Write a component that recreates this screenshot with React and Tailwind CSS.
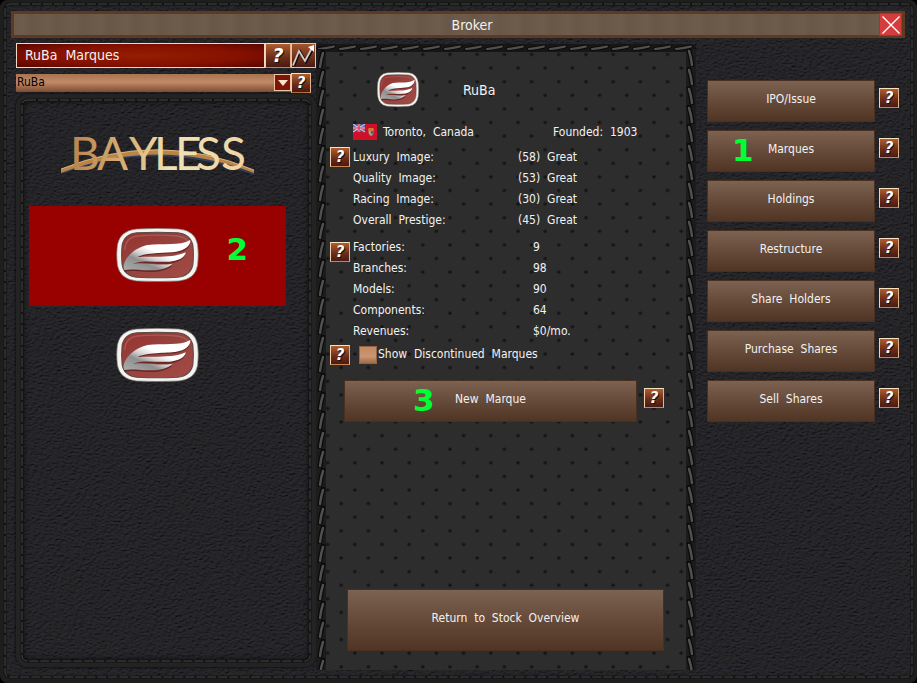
import { useState } from 'react'

const MARQUES = [
  { id: 1, name: 'Bayless', logo: 'bayless' },
  { id: 2, name: 'RuBa', logo: 'wing' },
  { id: 3, name: 'RuBa II', logo: 'wing' },
]

const IMAGE_STATS = [
  { label: 'Luxury  Image:', value: '(58)  Great' },
  { label: 'Quality  Image:', value: '(53)  Great' },
  { label: 'Racing  Image:', value: '(30)  Great' },
  { label: 'Overall  Prestige:', value: '(45)  Great' },
]

const COMPANY_STATS = [
  { label: 'Factories:', value: '9' },
  { label: 'Branches:', value: '98' },
  { label: 'Models:', value: '90' },
  { label: 'Components:', value: '64' },
  { label: 'Revenues:', value: '$0/mo.' },
]

const ACTIONS = [
  { label: 'IPO/Issue' },
  { label: 'Marques', marker: '1' },
  { label: 'Holdings' },
  { label: 'Restructure' },
  { label: 'Share  Holders' },
  { label: 'Purchase  Shares' },
  { label: 'Sell  Shares' },
]

function Leather() {
  return (
    <svg className="pointer-events-none absolute inset-0 h-full w-full" aria-hidden="true">
      <filter id="leather" x="0" y="0" width="100%" height="100%">
        <feTurbulence type="fractalNoise" baseFrequency="0.28 0.55" numOctaves="3" seed="4" result="n" />
        <feDiffuseLighting in="n" surfaceScale="1.9" diffuseConstant="1" lightingColor="#2a2a2d">
          <feDistantLight azimuth="250" elevation="52" />
        </feDiffuseLighting>
      </filter>
      <rect width="100%" height="100%" filter="url(#leather)" />
    </svg>
  )
}

// thread line running just inside a padded leather edge
function Stitch({ className }) {
  return (
    <svg className={`pointer-events-none absolute overflow-visible ${className}`} aria-hidden="true">
      <rect width="100%" height="100%" rx="5" fill="none" stroke="#121212" strokeWidth="3" />
      <rect width="100%" height="100%" rx="5" fill="none" stroke="#454545" strokeWidth="1" strokeDasharray="9 2" />
    </svg>
  )
}

function PerforatedPanel() {
  return (
    <svg className="pointer-events-none absolute inset-0 h-full w-full" aria-hidden="true">
      <defs>
        <pattern id="holesTop" x="-2" y="10.5" width="27.2" height="27.2" patternUnits="userSpaceOnUse">
          <ellipse cx="13.6" cy="13.6" rx="2" ry="1.6" fill="#151515" />
          <ellipse cx="0" cy="0" rx="2" ry="1.6" fill="#151515" />
          <ellipse cx="27.2" cy="0" rx="2" ry="1.6" fill="#151515" />
          <ellipse cx="0" cy="27.2" rx="2" ry="1.6" fill="#151515" />
          <ellipse cx="27.2" cy="27.2" rx="2" ry="1.6" fill="#151515" />
        </pattern>
        <pattern id="holesBottom" x="-2" y="242" width="27.2" height="27.2" patternUnits="userSpaceOnUse">
          <ellipse cx="13.6" cy="13.6" rx="2" ry="1.6" fill="#151515" />
          <ellipse cx="0" cy="0" rx="2" ry="1.6" fill="#151515" />
          <ellipse cx="27.2" cy="0" rx="2" ry="1.6" fill="#151515" />
          <ellipse cx="0" cy="27.2" rx="2" ry="1.6" fill="#151515" />
          <ellipse cx="27.2" cy="27.2" rx="2" ry="1.6" fill="#151515" />
        </pattern>
        <pattern id="ropeLeft" width="10" height="19" y="6" patternUnits="userSpaceOnUse">
          <rect width="10" height="19" fill="#1c1c1c" />
          <path d="M4 17 Q5 9 7 2" fill="none" stroke="#0a0a0a" strokeWidth="5" strokeLinecap="round" />
          <path d="M4 17 Q5 9 7 3" fill="none" stroke="#505050" strokeWidth="2.4" strokeLinecap="round" />
        </pattern>
        <pattern id="ropeRight" width="10" height="19" y="4" patternUnits="userSpaceOnUse">
          <rect width="10" height="19" fill="#1c1c1c" />
          <path d="M6 17 Q5 9 3 2" fill="none" stroke="#0a0a0a" strokeWidth="5" strokeLinecap="round" />
          <path d="M6 17 Q5 9 3 3" fill="none" stroke="#505050" strokeWidth="2.4" strokeLinecap="round" />
        </pattern>
        <pattern id="ropeTop" width="21" height="8" patternUnits="userSpaceOnUse">
          <rect width="21" height="8" fill="#161616" />
          <path d="M3 5 Q9 4.500 18 2.500" fill="none" stroke="#0a0a0a" strokeWidth="4" strokeLinecap="round" />
          <path d="M3 5 Q9 4.500 18 2.500" fill="none" stroke="#505050" strokeWidth="2" strokeLinecap="round" />
        </pattern>
      </defs>
      <rect width="100%" height="100%" rx="8" fill="#2d2d2d" />
      <rect width="100%" height="245" rx="8" fill="url(#holesTop)" />
      <rect y="245" className="h-[calc(100%-245px)]" width="100%" fill="url(#holesBottom)" />
      <rect width="100%" height="8" rx="4" fill="url(#ropeTop)" />
      <rect width="10" y="5" className="h-[calc(100%-5px)]" fill="url(#ropeLeft)" />
      <svg x="100%" className="overflow-visible">
        <g transform="translate(-10 0)">
          <rect width="10" y="5" className="h-[calc(100%-5px)]" fill="url(#ropeRight)" />
        </g>
      </svg>
    </svg>
  )
}

function WingLogo({ className }) {
  return (
    <svg viewBox="2 0 245 162" preserveAspectRatio="none" className={className} role="img" aria-label="RuBa emblem">
      <defs>
        <linearGradient id="enamel" x1="0" y1="0" x2="1" y2="1">
          <stop offset="0" stopColor="#97322f" />
          <stop offset="0.5" stopColor="#96443f" />
          <stop offset="1" stopColor="#a44a44" />
        </linearGradient>
        <linearGradient id="chrome" x1="1" y1="0" x2="0" y2="1">
          <stop offset="0.45" stopColor="#ffffff" />
          <stop offset="0.6" stopColor="#cfcfcf" />
          <stop offset="0.72" stopColor="#8f8f8f" />
          <stop offset="1" stopColor="#adadad" />
        </linearGradient>
      </defs>
      <path
        d="M62 3 Q124 -1 188 3 Q236 8 243 50 Q247 80 243 112 Q236 154 188 159 Q124 162 62 159 Q14 154 6 112 Q2 80 6 50 Q14 8 62 3Z"
        fill="#f4f3f0"
        stroke="#6d6a64"
        strokeWidth="2"
      />
      <path
        d="M64 14 Q124 11 184 14 Q222 18 229 52 Q232 80 229 110 Q222 144 184 148 Q124 151 64 148 Q26 144 20 110 Q17 80 20 52 Q26 18 64 14Z"
        fill="url(#enamel)"
        stroke="#5a4a48"
        strokeWidth="3"
      />
      <path d="M28 66 Q30 28 66 24 Q124 19 182 24 Q212 28 217 46" fill="none" stroke="#bd7470" strokeWidth="4" opacity="0.5" />
      <path
        d="M24 116 C26 90 55 68 95 60 C140 53 190 58 219 38 C222 52 205 66 180 70 C150 74 90 70 66 86 C100 82 170 90 206 73 C203 88 185 98 160 102 C120 106 80 94 52 102 C90 104 130 114 167 108 C155 120 130 127 100 127 C70 126 45 122 26 126Z"
        fill="#4a1614"
        transform="translate(1 5)"
        opacity="0.6"
      />
      <path
        d="M24 116 C26 90 55 60 95 51 C140 45 190 55 221 36 C224 52 205 68 180 71 C150 76 90 72 66 87 C100 84 170 92 208 73 C205 90 185 98 160 101 C120 104 80 94 52 108 C90 102 130 115 169 107 C155 121 130 128 100 127 C70 126 45 122 26 126Z"
        fill="url(#chrome)"
      />
    </svg>
  )
}

function BaylessLogo() {
  return (
    <svg viewBox="0 0 196 56" className="h-[56px] w-[196px] overflow-visible" role="img" aria-label="Bayless">
      <defs>
        <linearGradient id="gold" gradientUnits="userSpaceOnUse" x1="14" y1="0" x2="188" y2="0">
          <stop offset="0" stopColor="#b98650" />
          <stop offset="0.35" stopColor="#dcb87c" />
          <stop offset="0.55" stopColor="#efe2b6" />
          <stop offset="1" stopColor="#f0d3a4" />
        </linearGradient>
      </defs>
      <path d="M1 44 Q98 4 194 45 L194 48 Q98 11 1 47Z" fill="#33415f" />
      <path d="M1 42 Q98 3 194 43 L194 46 Q98 9 1 46Z" fill="#b98445" />
      <path d="M1 42 Q98 3 194 43" fill="none" stroke="#ecc68e" strokeWidth="0.8" />
      <text
        x="10 37 69 94 115 136 161"
        y="43"
        fill="url(#gold)"
        className="font-['Lato',sans-serif] text-[46px]"
      >
        BAYLESS
      </text>
    </svg>
  )
}

function Flag() {
  return (
    <svg viewBox="0 0 24 16" className="h-4 w-6" role="img" aria-label="Canadian Red Ensign">
      <rect width="24" height="16" fill="#d01028" />
      <rect width="12" height="8" fill="#4a4c90" />
      <path d="M0 0L12 8M12 0L0 8" stroke="#cfc0da" strokeWidth="1.2" />
      <path d="M6 0V8M0 4H12" stroke="#e4cfdc" strokeWidth="2.4" />
      <path d="M6 0V8M0 4H12" stroke="#cf2a4c" strokeWidth="1.2" />
      <path d="M15.500 5H20.500V9Q20 11.500 18 12Q16 11.500 15.500 9Z" fill="#a09a90" />
      <path d="M15.500 4H20.500V7H15.500Z" fill="#cf7a2c" />
      <path d="M18 7H20.500V9.500H18Z" fill="#4a5a7a" />
    </svg>
  )
}

function HelpButton({ topic, large }) {
  return (
    <button
      aria-label={`Help: ${topic}`}
      className={`flex shrink-0 items-center justify-center border border-t-[#f6e3c6] border-r-[#e0b48c] border-b-[#c9814f] border-l-[#f0d2ae] bg-linear-to-b from-[#b05e2c] via-[#6a2c18] via-60% to-[#4a1a12] font-['DejaVu_Sans',sans-serif] leading-none font-bold text-white italic text-shadow-[1px_1px_0_#111] ${
        large ? 'h-[25px] w-[26px] text-[19px]' : 'h-5 w-5 text-[15px]'
      }`}
    >
      ?
    </button>
  )
}

function LeatherButton({ children, className }) {
  return (
    <button
      className={`relative border border-[#4a3020] bg-linear-to-b from-[#7c6251] to-[#503424] text-xs ${className}`}
    >
      {children}
    </button>
  )
}

function Marker({ children, className }) {
  return (
    <span
      className={`pointer-events-none absolute font-['DejaVu_Sans',sans-serif] text-[31px] leading-none font-bold text-[#00ff33] ${className}`}
    >
      {children}
    </span>
  )
}

function StatTable({ rows, labelClass }) {
  return (
    <table className="w-full table-fixed text-left">
      <tbody>
        {rows.map((r) => (
          <tr key={r.label} className="h-[21px]">
            <th className={`p-0 font-normal ${labelClass}`}>{r.label}</th>
            <td className="p-0">{r.value}</td>
          </tr>
        ))}
      </tbody>
    </table>
  )
}

function MarqueList({ selected, onSelect }) {
  return (
    <div className="relative mt-px flex-1 rounded-xl border-[6px] border-[#232323] px-[7px] pt-[6px] shadow-[inset_0_0_6px_#000,0_0_3px_#000]">
      <Stitch className="top-0 left-0 h-full w-full" />
      <ul className="relative mr-[17px]">
        {MARQUES.map((m) => (
          <li key={m.id}>
            <button
              aria-label={m.name}
              onClick={() => onSelect(m.id)}
              className={`relative flex h-[100px] w-full items-center justify-center pb-[2px] ${
                selected === m.id ? 'bg-[#990000]' : ''
              }`}
            >
              {m.logo === 'bayless' ? <BaylessLogo /> : <WingLogo className="h-[54px] w-[83px]" />}
              {selected === m.id && <Marker className="top-7 right-[38px]">2</Marker>}
            </button>
          </li>
        ))}
      </ul>
    </div>
  )
}

export default function App() {
  const [selected, setSelected] = useState(2)
  const [showDiscontinued, setShowDiscontinued] = useState(false)

  return (
    <div className="min-h-screen bg-black">
      <div className="relative flex min-h-screen flex-col overflow-hidden rounded-lg px-[11px] pt-[11px] font-['DejaVu_Sans_Condensed','DejaVu_Sans',sans-serif] text-xs whitespace-pre text-[#f2f2f2]">
        <Leather />
        <div className="pointer-events-none absolute inset-0 rounded-lg border-6 border-[#1e1e1e]" />
        <Stitch className="top-1 left-[5px] h-[calc(100%-10px)] w-[calc(100%-10px)]" />

        <header className="relative mr-px flex h-[27px] items-center border-[3px] border-[#5f3a22] bg-[repeating-linear-gradient(90deg,#6b5949_0px,#6d5b4b_9px,#685747_17px,#6b5949_26px)]">
          <h1 className="flex-1 pl-[51px] text-center text-sm">Broker</h1>
          <button
            aria-label="Close"
            className="flex h-[23px] w-[23px] items-center justify-center border border-[#b82a2e] bg-[#d43c3e]"
          >
            <svg viewBox="0 0 20 20" className="h-5 w-5" stroke="#fff" strokeWidth="1.4">
              <path d="M1.500 1.500L18.500 18.500M18.500 1.500L1.500 18.500" />
            </svg>
          </button>
        </header>

        <main className="relative grid flex-1 grid-cols-[300px_1fr_205px] px-[5px]">
          <section className="flex flex-col pt-[5px] pb-4">
            <div className="flex h-[25px]">
              <h2 className="flex flex-1 items-center border border-[#efd9c4] bg-[radial-gradient(ellipse_at_center,#951e00_0%,#841000_60%,#5a0500_100%)] pb-[2px] pl-2 text-sm">
                RuBa  Marques
              </h2>
              <HelpButton topic="Marque list" large />
              <button
                aria-label="Show chart"
                className="h-[25px] w-[25px] border border-[#e6c3a0] bg-linear-to-b from-[#a5552a] to-[#481a12]"
              >
                <svg viewBox="0 0 23 23" className="h-[23px] w-[23px]" fill="none">
                  <path d="M2 22L8 7.500L14 18L21 5" stroke="#1a0a06" strokeWidth="2.5" />
                  <path d="M1 21.500L7 7L13 17L20 4" stroke="#d0d0d0" strokeWidth="1.8" />
                  <path d="M16 3L22 1L22 8Z" fill="#fff" />
                </svg>
              </button>
            </div>

            <div className="mt-[5px] flex h-5">
              <div className="relative mt-px h-[18px] w-[275px]">
                <select
                  aria-label="Company"
                  className="h-full w-full appearance-none bg-linear-to-b from-[#a8734f] via-[#c28a68] via-45% to-[#7d4d33] pb-[6px] pl-px text-black"
                >
                  <option>RuBa</option>
                </select>
                <span className="pointer-events-none absolute top-0 right-0 flex h-[17px] w-[17px] items-center justify-center border border-[#e9c7a6] bg-[#7e1508]">
                  <svg viewBox="0 0 10 6" className="h-[6px] w-[10px]">
                    <path d="M0 0H10L5 6Z" fill="#fbe3c8" />
                  </svg>
                </span>
              </div>
              <HelpButton topic="Company" />
            </div>

            <MarqueList selected={selected} onSelect={setSelected} />
          </section>

          <section className="relative mt-[6px] mb-[13px] flex flex-col pr-8 pl-[14px]">
            <PerforatedPanel />

            <div className="relative mt-7 ml-[47px] flex items-center gap-11">
              <WingLogo className="h-[35px] w-[42px]" />
              <h3 className="text-sm">RuBa</h3>
            </div>

            <div className="relative mt-[17px] ml-[23px] flex h-4 items-center">
              <Flag />
              <span className="ml-[6px] w-[170px]">Toronto,  Canada</span>
              <span>Founded:  1903</span>
            </div>

            <div className="relative mt-[6px] flex gap-[3px]">
              <div className="mt-px">
                <HelpButton topic="Image" />
              </div>
              <StatTable rows={IMAGE_STATS} labelClass="w-[165px]" />
            </div>

            <div className="relative mt-[6px] flex gap-[3px]">
              <div className="mt-[6px]">
                <HelpButton topic="Operations" />
              </div>
              <StatTable rows={COMPANY_STATS} labelClass="w-[180px]" />
            </div>

            <div className="relative mt-1 flex items-center">
              <HelpButton topic="Discontinued marques" />
              <input
                id="discontinued"
                type="checkbox"
                checked={showDiscontinued}
                onChange={(e) => setShowDiscontinued(e.target.checked)}
                className="ml-[9px] h-[18px] w-[18px] appearance-none border border-[#9a6242] bg-linear-to-b from-[#c08863] via-[#cb9773] via-60% to-[#a06a48] checked:bg-[#7e1508]"
              />
              <label htmlFor="discontinued" className="pb-[2px] pl-px">
                Show  Discontinued  Marques
              </label>
            </div>

            <div className="relative mt-[15px] ml-[14px] flex items-start gap-[7px]">
              <LeatherButton className="h-[42px] flex-1 pb-1">
                <Marker className="top-1 left-[68px]">3</Marker>
                New  Marque
              </LeatherButton>
              <div className="mt-2">
                <HelpButton topic="New marque" />
              </div>
            </div>

            <LeatherButton className="mt-auto mb-[19px] ml-[17px] h-[62px] pb-1">
              Return  to  Stock  Overview
            </LeatherButton>
          </section>

          <nav className="flex flex-col gap-2 pt-[42px] pr-[2px] pl-[11px]">
            {ACTIONS.map((a) => (
              <div key={a.label} className="flex items-start gap-1">
                <LeatherButton className="h-[42px] flex-1 pb-1">
                  {a.marker && <Marker className="top-1 left-6">{a.marker}</Marker>}
                  {a.label}
                </LeatherButton>
                <div className="mt-2">
                  <HelpButton topic={a.label} />
                </div>
              </div>
            ))}
          </nav>
        </main>
      </div>
    </div>
  )
}
